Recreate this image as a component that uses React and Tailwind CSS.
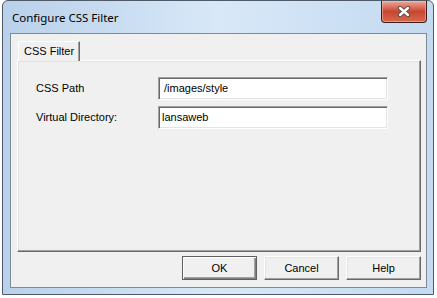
export default function App() {
  const sunken =
    'border border-t-[#a0a0a0] border-l-[#a0a0a0] border-b-white border-r-white shadow-[inset_1px_1px_0_#696969,inset_-1px_-1px_0_#e3e3e3]';
  const raised =
    'border border-t-white border-l-white border-b-[#696969] border-r-[#696969] shadow-[inset_-1px_-1px_0_#a0a0a0,inset_1px_1px_0_#e3e3e3]';

  return (
    <div className="w-[437px] h-[298px] bg-white pl-[2px] font-['Liberation_Sans',sans-serif] text-[11px] text-black">
      <div className="w-[432px] h-[295px] rounded-t-[6px] border border-[#4e5a67] bg-gradient-to-r from-[#b9d1ea] via-[#d8e8f8] to-[#c4daf0] flex flex-col">
        {/* title bar */}
        <div className="h-[32px] flex items-start">
          <span className="pl-[9px] pt-[9px] font-['Noto_Sans',sans-serif] text-[11.5px] leading-[16px]">
            Configure CSS Filter
          </span>
          <button
            type="button"
            className="ml-auto mr-[6px] w-[46px] h-[22px] rounded-b-[4px] border border-[#3d1d17] border-t-0 bg-gradient-to-b from-[#e9a899] via-[#c94530] to-[#d9694c] shadow-[inset_0_0_0_1px_rgba(255,210,200,0.45)] flex items-center justify-center"
            aria-label="Close"
          >
            <svg width="14" height="11" viewBox="0 0 14 11">
              <path d="M3 2 L11 9 M11 2 L3 9" stroke="#4a4a4a" strokeWidth="4.2" strokeLinecap="round" />
              <path d="M3 2 L11 9 M11 2 L3 9" stroke="#ffffff" strokeWidth="2.4" strokeLinecap="round" />
            </svg>
          </button>
        </div>

        {/* client area */}
        <div className="ml-[7px] w-[417px] h-[255px] border border-[#7d8a98] bg-[#f0f0f0] flex flex-col">
          <div className="pl-[7px] pt-[7px] flex">
            <div className="relative z-10 w-[62px] h-[20px] bg-[#f0f0f0] border border-t-white border-l-white border-r-[#696969] border-b-0 shadow-[inset_-1px_0_0_#a0a0a0] flex items-center pl-[5px]">
              CSS Filter
            </div>
          </div>
          <div className={`ml-[6px] -mt-px w-[404px] h-[192px] bg-[#f0f0f0] ${raised} pl-[18px] pt-[16px] flex flex-col gap-[6px]`}>
            <div className="flex items-center">
              <span className="w-[122px]">CSS Path</span>
              <div className={`w-[230px] h-[23px] bg-white ${sunken} flex items-center pl-[5px]`}>/images/style</div>
            </div>
            <div className="flex items-center">
              <span className="w-[122px]">Virtual Directory:</span>
              <div className={`w-[230px] h-[23px] bg-white ${sunken} flex items-center pl-[3px]`}>lansaweb</div>
            </div>
          </div>
          <div className="flex justify-end gap-[7px] pr-[5px] pt-[4px]">
            <button type="button" className="w-[75px] h-[24px] border border-[#5f5f5f] bg-[#f0f0f0] shadow-[inset_1px_1px_0_#ffffff,inset_-1px_-1px_0_#808080,inset_-2px_-2px_0_#a0a0a0] flex items-center justify-center">
              OK
            </button>
            <button type="button" className={`w-[75px] h-[24px] bg-[#f0f0f0] ${raised} flex items-center justify-center`}>
              Cancel
            </button>
            <button type="button" className={`w-[75px] h-[24px] bg-[#f0f0f0] ${raised} flex items-center justify-center`}>
              Help
            </button>
          </div>
        </div>
      </div>
    </div>
  );
}
